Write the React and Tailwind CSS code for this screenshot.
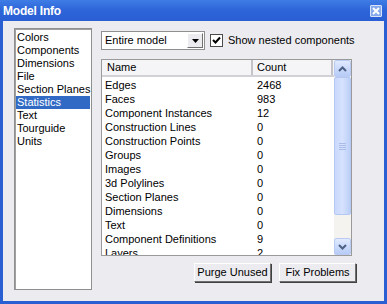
const CATEGORIES = ['Colors', 'Components', 'Dimensions', 'File', 'Section Planes', 'Statistics', 'Text', 'Tourguide', 'Units'];

const STATS = [
  ['Edges', '2468'],
  ['Faces', '983'],
  ['Component Instances', '12'],
  ['Construction Lines', '0'],
  ['Construction Points', '0'],
  ['Groups', '0'],
  ['Images', '0'],
  ['3d Polylines', '0'],
  ['Section Planes', '0'],
  ['Dimensions', '0'],
  ['Text', '0'],
  ['Component Definitions', '9'],
  ['Layers', '2'],
];

function Chevron({ up }) {
  return (
    <svg width="9" height="6" viewBox="0 0 9 6">
      <path d={up ? 'M1 5 L4.5 1.5 L8 5' : 'M1 1 L4.5 4.5 L8 1'} fill="none" stroke="#4d6185" strokeWidth="2" />
    </svg>
  );
}

function ScrollButton({ up }) {
  return (
    <div className="h-[17px] flex items-center justify-center rounded-[2px] border border-[#b9cbf3] bg-gradient-to-b from-[#e1eafe] to-[#b6cbf7]">
      <Chevron up={up} />
    </div>
  );
}

function XpButton({ children }) {
  return (
    <button className="w-[77px] h-[19px] flex items-center justify-center bg-[#ecebef] text-black border border-t-white border-l-white border-b-[#6f6f6f] border-r-[#6f6f6f] shadow-[1px_1px_0_#404040]">
      {children}
    </button>
  );
}

export default function App() {
  return (
    <div className="w-[387px] h-[304px] flex flex-col bg-[#2a5fd4] font-['Liberation_Sans',Arial,sans-serif] text-[11px] text-black">
      <div className="h-[21px] flex items-center justify-between pl-[3px] pr-[5px] bg-gradient-to-b from-[#3f7de6] via-[#2d64d8] to-[#2a5fd4]">
        <span className="text-white font-bold text-[12px] tracking-[-0.2px]">Model Info</span>
        <div className="w-[12px] h-[12px] flex items-center justify-center rounded-[1px] border border-[#d8e4fb] bg-[#86a9ec]">
          <svg width="8" height="8" viewBox="0 0 8 8">
            <path d="M1 1 L7 7 M7 1 L1 7" stroke="white" strokeWidth="2" />
          </svg>
        </div>
      </div>

      <div className="flex-1 mx-[3px] mb-[3px] bg-[#ecebef] flex pl-[11px] pt-[7px]">
        <div className="w-[78px] h-[262px] bg-white border border-[#8e8f8f] shadow-[inset_1px_1px_0_#a0a0a0] pt-[2px] px-[1px]">
          {CATEGORIES.map((c) => (
            <div
              key={c}
              className={`h-[13px] leading-[13px] pl-[1px] whitespace-nowrap ${c === 'Statistics' ? 'bg-[#316ac5] text-white' : ''}`}
            >
              {c}
            </div>
          ))}
        </div>

        <div className="ml-[9px] w-[255px] flex flex-col">
          <div className="mt-[3px] flex items-center">
            <div className="w-[104px] h-[19px] bg-white border border-[#8f8f8f] flex items-center justify-between pl-[3px] pr-[1px]">
              <span>Entire model</span>
              <div className="w-[16px] h-[15px] bg-[#ecebef] border border-t-white border-l-white border-b-[#707070] border-r-[#707070] flex items-center justify-center">
                <svg width="7" height="4" viewBox="0 0 7 4">
                  <path d="M0 0 H7 L3.5 4 Z" fill="black" />
                </svg>
              </div>
            </div>
            <div className="ml-[5px] w-[13px] h-[13px] bg-white border border-[#4a4a4a] flex items-center justify-center">
              <svg width="9" height="9" viewBox="0 0 9 9">
                <path d="M1 4 L3.5 6.5 L8 1.5" fill="none" stroke="black" strokeWidth="2" />
              </svg>
            </div>
            <span className="ml-[5px]">Show nested components</span>
          </div>

          <div className="mt-[9px] w-[251px] h-[197px] bg-white border border-[#9a9a9a] flex overflow-hidden">
            <div className="flex-1 flex flex-col overflow-hidden">
              <div className="h-[17px] flex bg-[#f5f5f7] border-b-2 border-[#d2d1d6]">
                <div className="w-[151px] pl-[5px] leading-[15px] border-r-2 border-[#c4c3c8]">Name</div>
                <div className="w-[80px] pl-[4px] leading-[15px] border-r-2 border-[#c4c3c8]">Count</div>
              </div>
              <div className="pt-[1px]">
                {STATS.map(([name, count]) => (
                  <div key={name} className="h-[14px] leading-[14px] flex whitespace-nowrap">
                    <span className="w-[152px] pl-[3px]">{name}</span>
                    <span className="pl-[3px]">{count}</span>
                  </div>
                ))}
              </div>
            </div>
            <div className="w-[17px] flex flex-col bg-[#f4f3ef]">
              <ScrollButton up />
              <div className="h-[138px] flex items-center justify-center rounded-[2px] border border-[#b4c8f3] bg-gradient-to-r from-[#c9d8fc] via-[#d6e2fd] to-[#bccff8]">
                <div className="flex flex-col gap-[1px]">
                  <div className="w-[7px] h-[1px] bg-[#a9bde8]" />
                  <div className="w-[7px] h-[1px] bg-[#a9bde8]" />
                  <div className="w-[7px] h-[1px] bg-[#a9bde8]" />
                  <div className="w-[7px] h-[1px] bg-[#a9bde8]" />
                </div>
              </div>
              <div className="flex-1" />
              <ScrollButton />
            </div>
          </div>

          <div className="mt-[7px] flex justify-end gap-[8px]">
            <XpButton>Purge Unused</XpButton>
            <XpButton>Fix Problems</XpButton>
          </div>
        </div>
      </div>
    </div>
  );
}
